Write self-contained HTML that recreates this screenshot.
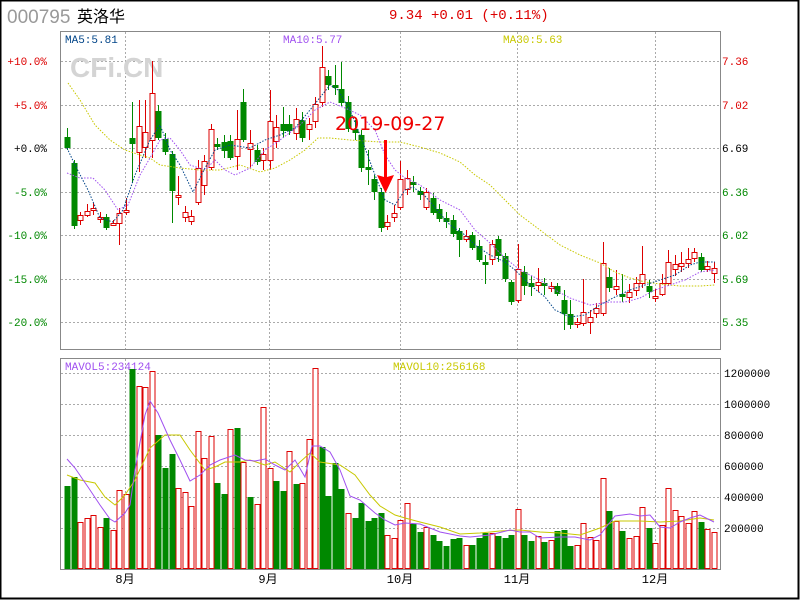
<!DOCTYPE html>
<html><head><meta charset="utf-8"><style>
html,body{margin:0;padding:0;background:#fff;}
#w{position:relative;width:800px;height:600px;overflow:hidden;}
svg text{font-family:"Liberation Mono","Noto Sans CJK SC",monospace;}
</style></head><body><div id="w">
<svg id="s" width="800" height="600" xmlns="http://www.w3.org/2000/svg">
<rect x="0.5" y="0.5" width="798" height="598" fill="#fff" stroke="#000" stroke-width="2"/>
<text x="7" y="23" font-size="19" fill="#999" style="font-family:'Liberation Sans',sans-serif">000795</text>
<text x="77" y="22" font-size="16" fill="#000" style="font-family:'Noto Sans CJK SC',sans-serif">英洛华</text>
<text x="389" y="19" font-size="14" fill="#d00">9.34 +0.01 (+0.11%)</text>
<g id="grid" stroke="#aaa" stroke-dasharray="2,2" stroke-width="1"></g>
<rect x="60.5" y="31.5" width="660" height="318" fill="none" stroke="#888"/>
<rect x="60.5" y="358.5" width="660" height="211" fill="none" stroke="#888"/>
<text x="70" y="77" font-size="28" font-weight="bold" fill="#d4d4d4" style="font-family:'Liberation Sans',sans-serif">CFi.CN</text>
<text x="65" y="43" font-size="11" fill="#004488">MA5:5.81</text>
<text x="283" y="43" font-size="11" fill="#a050f0">MA10:5.77</text>
<text x="503" y="43" font-size="11" fill="#c8c800">MA30:5.63</text>
<text x="65" y="370" font-size="11" fill="#a050f0">MAVOL5:234124</text>
<text x="393" y="370" font-size="11" fill="#c8c800">MAVOL10:256168</text>
<g id="lab" font-size="11"></g>
<g id="c"></g>
<text x="335" y="130" font-size="19" fill="#e00" style="font-family:'DejaVu Sans',sans-serif">2019-09-27</text>
<path d="M384,140 L387,140 L387,177 L394,175 L385.5,193 L377,175 L384,177 Z" fill="#f00"/>
</svg>
</div>
<script>
var S=document.getElementById('s'),NS='http://www.w3.org/2000/svg';
function el(p,t,a,txt){var e=document.createElementNS(NS,t);for(var k in a)e.setAttribute(k,a[k]);if(txt)e.textContent=txt;p.appendChild(e);return e;}
var G=document.getElementById('grid'),L=document.getElementById('lab'),C=document.getElementById('c');
[61,105,148,192,235,279,322].forEach(function(y){el(G,'line',{x1:61,x2:720,y1:y+.5,y2:y+.5});});
[373,404,435,466,497,528].forEach(function(y){el(G,'line',{x1:61,x2:720,y1:y+.5,y2:y+.5});});
[125,269,400,517,655].forEach(function(x){el(G,'line',{x1:x+.5,x2:x+.5,y1:32,y2:349});el(G,'line',{x1:x+.5,x2:x+.5,y1:359,y2:569});});
var pl=[['+10.0%',61,'#d00'],['+5.0%',105,'#d00'],['+0.0%',148,'#000'],['-5.0%',192,'#080'],['-10.0%',235,'#080'],['-15.0%',279,'#080'],['-20.0%',322,'#080']];
pl.forEach(function(p){el(L,'text',{x:47,y:p[1]+4,'text-anchor':'end',fill:p[2]},p[0]);});
var pr=[['7.36',61,'#d00'],['7.02',105,'#d00'],['6.69',148,'#000'],['6.36',192,'#080'],['6.02',235,'#080'],['5.69',279,'#080'],['5.35',322,'#080']];
pr.forEach(function(p){el(L,'text',{x:722,y:p[1]+4,fill:p[2]},p[0]);});
['1200000','1000000','800000','600000','400000','200000'].forEach(function(t,i){el(L,'text',{x:724,y:[373,404,435,466,497,528][i]+4,fill:'#000'},t);});
[['8月',125],['9月',268],['10月',400],['11月',517],['12月',655]].forEach(function(m){el(L,'text',{x:m[1],y:583,'text-anchor':'middle',fill:'#000','font-size':12},m[0]);});
var K=[['g',137,147,128,150],['g',163,225,160,229],['r',215,220,212,225],['r',211,215,204,217],['r',208,210,203,215],['r',217,219,212,223],['g',217,227,214,230],['r',223,225,220,226],['r',213,223,208,245],['r',210,212,198,215],
['g',138,143,102,183],['r',126,152,100,172],['r',132,147,100,158],['r',93,140,61,158],['g',111,137,105,140],['g',139,151,133,155],['g',154,190,151,223],['r',195,197,176,205],['r',212,217,206,222],['r',216,221,210,225],
['r',168,202,160,205],['r',161,185,155,195],['r',129,167,124,170],['g',144,146,138,150],['g',142,150,135,158],['g',141,157,135,160],['r',139,156,110,170],['g',102,139,89,142],['r',143,149,130,168],['g',150,161,145,165],
['r',154,160,148,170],['r',121,160,90,170],['r',127,141,115,148],['g',124,130,107,138],['g',124,130,115,135],['r',119,133,108,140],['g',120,137,112,142],['r',124,129,118,140],['r',104,121,97,128],['r',67,102,46,107],
['g',76,84,70,90],['g',85,87,65,95],['g',89,102,62,106],['g',102,128,96,132],['g',129,132,120,140],['g',135,167,130,172],['g',167,169,150,185],['g',179,191,175,200],['g',192,227,188,232],['r',222,226,215,230],
['r',213,217,205,222],['r',179,207,161,210],['r',178,189,170,195],['g',182,184,176,192],['g',191,194,187,200],['r',192,207,188,210],['g',198,212,193,215],['g',209,218,204,222],['g',218,221,212,228],['g',220,233,215,237],
['g',231,239,228,257],['r',236,239,230,242],['g',235,247,232,250],['g',246,259,240,262],['g',262,264,255,284],['r',244,259,240,265],['g',239,255,236,262],['g',256,278,253,282],['g',282,301,280,305],['r',269,300,244,303],
['g',272,285,266,295],['g',283,286,276,296],['r',282,285,268,292],['g',283,285,278,295],['r',286,288,282,292],['g',286,293,283,296],['g',300,313,290,330],['g',314,324,300,329],['r',322,324,318,328],['r',312,323,279,326],
['r',317,322,310,334],['r',308,313,303,318],['r',263,313,242,316],['g',277,287,268,292],['r',286,289,270,295],['g',294,296,274,302],['r',292,297,284,303],['r',283,290,277,296],['r',274,283,246,288],['g',286,291,280,298],
['r',296,298,289,302],['r',283,294,274,296],['r',262,283,250,286],['r',264,269,255,276],['r',263,266,252,272],['r',259,263,248,268],['r',252,258,248,262],['g',257,269,253,272],['r',266,269,261,272],['r',268,273,262,283]];
var V=[486,477,522,518,515,527,518,530,490,494,369,386,387,371,435,468,454,488,492,506,431,458,436,483,494,429,428,462,497,504,407,468,481,491,451,484,483,439,368,447,496,463,489,513,518,503,521,518,513,535,
538,520,503,524,532,527,535,541,546,539,538,545,545,538,533,533,536,538,535,509,535,541,536,542,540,531,530,546,545,523,537,540,478,511,521,531,538,536,507,528,543,525,488,510,516,523,511,522,529,532];
var VC='ggrrrrgrrrgrrrgggrrrrrrggrgrgrrrggrgrrrggggrgggggrrr'+'rggrgggggrgggrgggrggrgrgggrrrrrgrgrrrgrrrrrrrgrr';
VC=VC.slice(0,50)+'rrrggrgggggrgggrgggrggrgrgggrrrrrgrgrrrgrrrrrrrgrr';
for(var i=0;i<100;i++){
 var x=Math.round(67+6.535*i),k=K[i],col=k[0]=='r'?'#d00':'#080';
 el(C,'line',{x1:x+.5,x2:x+.5,y1:k[3],y2:k[4],stroke:col});
 var h=Math.max(1,k[2]-k[1]);
 if(k[0]=='r')el(C,'rect',{x:x-2,y:k[1]+.5,width:5,height:h,fill:'#fff',stroke:col});
 else el(C,'rect',{x:x-2.5,y:k[1],width:6,height:h+1,fill:col});
 var vc=VC.charAt(i),vt=V[i];
 if(vc=='r')el(C,'rect',{x:x-2,y:vt+.5,width:5,height:568-vt,fill:'#fff',stroke:'#d00'});
 else el(C,'rect',{x:x-2.5,y:vt,width:6,height:569-vt,fill:'#080'});
}
function pline(pts,col,dash,w){el(C,'polyline',{points:pts,fill:'none',stroke:col,'stroke-width':w||1,'stroke-dasharray':dash||'none'});}
pline('68,83 80,100 95,125 110,140 125,150 140,155 150,158 160,165 180,168 200,170 220,170 240,165 260,172 275,168 290,160 305,150 318,138 330,138 350,140 380,142 400,142 420,147 440,153 460,162 475,175 490,185 505,200 520,215 540,230 560,245 580,255 600,263 615,272 630,278 645,282 660,284 680,286 700,286 715,285','#c8c800','1.5,1.5');
pline('67,173 80,178 93,178 105,190 118,210 128,205 140,175 150,158 160,140 170,138 180,150 190,165 205,170 215,160 225,170 235,175 250,168 265,150 280,140 300,125 315,110 330,102 345,108 360,115 375,130 385,155 395,170 405,178 420,185 440,200 460,210 475,230 490,243 505,258 520,270 540,280 555,290 570,298 590,305 610,302 625,302 640,298 655,290 670,285 685,280 700,272 715,270','#a050f0','1.5,1.5');
pline('67,148 75,165 88,190 100,218 113,222 123,210 135,175 150,140 160,125 170,150 180,165 193,192 205,168 215,150 230,145 250,148 265,140 280,135 295,128 310,110 318,100 330,85 338,90 350,110 362,140 375,175 385,200 395,205 405,190 413,187 425,196 437,210 450,225 465,235 475,245 490,255 505,262 515,270 530,285 545,297 555,310 570,317 585,315 600,305 615,297 630,290 645,285 660,280 675,275 690,265 700,262 715,262','#004488','1.5,1.5');
pline('67,475 80,480 95,483 105,497 115,505 125,495 135,480 150,448 165,435 180,435 190,450 205,470 215,467 225,462 240,462 250,460 265,465 275,462 290,472 300,462 310,453 320,462 340,465 355,475 370,495 380,506 395,515 405,518 420,522 440,527 460,534 480,533 500,531 520,530 540,532 560,533 580,535 600,528 615,521 640,521 660,522 680,521 700,518 714,520','#c8c800');
pline('67,459 75,468 88,487 100,505 110,519 115,522 125,513 130,505 135,470 145,415 150,401 158,413 170,440 180,460 190,481 200,475 210,465 220,460 235,455 245,460 255,461 265,459 275,465 285,470 295,460 305,477 312,446 320,446 330,452 340,470 350,496 360,500 375,513 385,520 395,525 405,523 420,524 440,532 460,536 470,537 490,535 510,530 520,532 530,532 540,538 560,537 575,537 590,540 600,535 615,516 630,514 640,516 650,515 660,527 670,528 680,522 690,518 700,515 714,522','#a050f0');
</script>
</body></html>
